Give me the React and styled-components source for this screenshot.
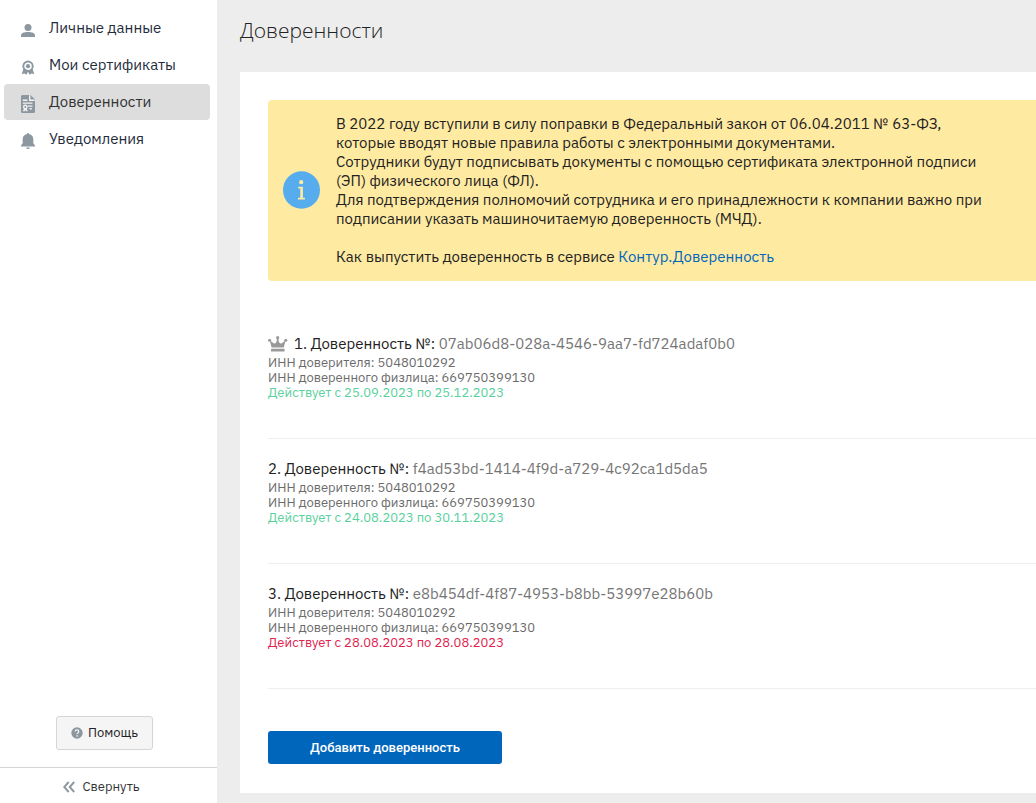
import React, { useState } from "react";
import styled, { createGlobalStyle } from "styled-components";

const menu = [
    { id: "personal", title: "Личные данные", Icon: UserIcon },
    { id: "certs", title: "Мои сертификаты", Icon: CertIcon },
    { id: "poa", title: "Доверенности", Icon: DocIcon },
    { id: "notify", title: "Уведомления", Icon: BellIcon },
];

const poas = [
    {
        number: "07ab06d8-028a-4546-9aa7-fd724adaf0b0",
        issuer: "5048010292",
        person: "669750399130",
        from: "25.09.2023",
        to: "25.12.2023",
        active: true,
        main: true,
    },
    {
        number: "f4ad53bd-1414-4f9d-a729-4c92ca1d5da5",
        issuer: "5048010292",
        person: "669750399130",
        from: "24.08.2023",
        to: "30.11.2023",
        active: true,
    },
    {
        number: "e8b454df-4f87-4953-b8bb-53997e28b60b",
        issuer: "5048010292",
        person: "669750399130",
        from: "28.08.2023",
        to: "28.08.2023",
        active: false,
    },
];

function UserIcon() {
    return (
        <svg width="16" height="16" viewBox="0 0 16 16" fill="currentColor" aria-hidden="true">
            <circle cx="8" cy="5.4" r="3.5" />
            <path d="M1 15v-1.600C1 11 4 9.900 8 9.900s7 1.100 7 3.500V15z" />
        </svg>
    );
}

function CertIcon() {
    return (
        <svg width="16" height="16" viewBox="0 0 16 16" aria-hidden="true">
            <path d="M3.800 9 1.700 15l2.900-.5L6.600 15.800 8 12.600l1.400 3.200 2-1.300 2.900.5-2.100-6z" fill="currentColor" />
            <circle cx="8" cy="7.200" r="4.700" fill="#fff" stroke="currentColor" strokeWidth="1.900" />
            <circle cx="8" cy="7.200" r="2.100" fill="currentColor" />
        </svg>
    );
}

function DocIcon() {
    return (
        <svg width="16" height="20" viewBox="0 0 16 20" aria-hidden="true">
            <path d="M2.300 1H10.500l4.500 4.500v12A1.500 1.500 0 0 1 13.500 19h-11A1.500 1.500 0 0 1 1 17.500v-15A1.400 1.400 0 0 1 2.300 1z" fill="currentColor" />
            <path d="M9.700 1.300v4.900h5M2.800 6.200h4.700M2.800 9.100h9.700M8 12.100h4.500M9.500 14.800h2.300" fill="none" stroke="#f2f2f2" strokeWidth="1.400" />
            <circle cx="5.300" cy="13" r="1.700" fill="none" stroke="#f2f2f2" strokeWidth="1.400" />
            <path d="m4.200 14.500-1.500 2.800h1.900l.7-1 .7 1h1.900l-1.500-2.800z" fill="#f2f2f2" />
        </svg>
    );
}

function BellIcon() {
    return (
        <svg width="16" height="18" viewBox="0 0 16 18" fill="currentColor" aria-hidden="true">
            <path d="M7 1.900a1 1 0 0 1 2 0c2.700.5 4.300 2.500 4.300 5v4.300l1.700 2.300v1H1v-1l1.700-2.300V6.900c0-2.500 1.600-4.500 4.300-5z" />
            <path d="M6.200 15.500h3.600a1.800 1.600 0 0 1-3.600 0z" />
        </svg>
    );
}

function HelpIcon() {
    return (
        <svg width="12" height="12" viewBox="0 0 12 12" aria-hidden="true">
            <circle cx="6" cy="6" r="5.700" fill="#8d979f" />
            <path d="M4.200 4.600c0-1.100.8-1.700 1.800-1.700s1.800.6 1.800 1.600c0 1.200-1.700 1.300-1.700 2.600" fill="none" stroke="#f5f5f5" strokeWidth="1.200" />
            <circle cx="6.100" cy="8.900" r=".8" fill="#f5f5f5" />
        </svg>
    );
}

function CollapseIcon() {
    return (
        <svg width="12" height="12" viewBox="0 0 12 12" fill="none" stroke="#8d979f" strokeWidth="1.900" aria-hidden="true">
            <path d="M5.700 1 1.200 6l4.500 5M11.200 1 6.700 6l4.500 5" />
        </svg>
    );
}

function InfoIcon() {
    return (
        <InfoSvg width="37" height="38" viewBox="0 0 37 38" aria-hidden="true">
            <ellipse cx="18.500" cy="19" rx="18.500" ry="18.800" fill="#57acee" />
            <circle cx="18.200" cy="11.200" r="2.100" fill="#ffeaa2" />
            <path d="M15.200 15.800h4.700v11h2v1.700h-6.900v-1.700h2.300v-9.300h-2.100z" fill="#ffeaa2" />
        </InfoSvg>
    );
}

function CrownIcon() {
    return (
        <svg width="20" height="16" viewBox="0 0 20 16" fill="#999" role="img" aria-label="Основная">
            <path d="M3.600 11.500 1.800 4.600l3.900 2.700c1.400.7 2.700-.4 3-2.300L9 2h1.400l.3 3c.3 1.900 1.600 3 3 2.300l3.900-2.700-1.800 6.900z" />
            <circle cx="9.700" cy="1.700" r="1.600" />
            <circle cx="1.600" cy="4.300" r="1.500" />
            <circle cx="17.800" cy="4.300" r="1.500" />
            <rect x="3" y="12.800" width="13.600" height="2.700" rx=".6" />
        </svg>
    );
}

const App = () => {
    const [current, setCurrent] = useState("poa");

    return (
        <Page>
            <GlobalStyle />
            <Sidebar>
                <Menu>
                    {menu.map(({ id, title, Icon }) => (
                        <MenuLink
                            key={id}
                            href={`#${id}`}
                            $active={id === current}
                            onClick={() => setCurrent(id)}
                        >
                            <MenuIcon><Icon /></MenuIcon>
                            {title}
                        </MenuLink>
                    ))}
                </Menu>
                <HelpRow>
                    <HelpButton type="button"><HelpIcon />Помощь</HelpButton>
                </HelpRow>
                <CollapseButton type="button"><CollapseIcon />Свернуть</CollapseButton>
            </Sidebar>
            <Main>
                <Title>Доверенности</Title>
                <Card>
                    <Notice>
                        <InfoIcon />
                        <NoticeText>
                            <p>
                                В 2022 году вступили в силу поправки в Федеральный закон от 06.04.2011 № 63-ФЗ,<br />
                                которые вводят новые правила работы с электронными документами.
                            </p>
                            <p>
                                Сотрудники будут подписывать документы с помощью сертификата электронной подписи<br />
                                (ЭП) физического лица (ФЛ).
                            </p>
                            <p>
                                Для подтверждения полномочий сотрудника и его принадлежности к компании важно при<br />
                                подписании указать машиночитаемую доверенность (МЧД).
                            </p>
                            <HowTo>
                                Как выпустить доверенность в сервисе <Link href="#kontur">Контур.Доверенность</Link>
                            </HowTo>
                        </NoticeText>
                    </Notice>
                    <List>
                        {poas.map((poa, i) => (
                            <Item key={poa.number}>
                                <ItemTitle>
                                    {poa.main && <CrownIcon />}
                                    <span>
                                        {i + 1}. Доверенность №: <Number>{poa.number}</Number>
                                    </span>
                                </ItemTitle>
                                <Detail>ИНН доверителя: {poa.issuer}</Detail>
                                <Detail>ИНН доверенного физлица: {poa.person}</Detail>
                                <Validity $active={poa.active}>
                                    Действует с {poa.from} по {poa.to}
                                </Validity>
                            </Item>
                        ))}
                    </List>
                    <AddButton type="button">Добавить доверенность</AddButton>
                </Card>
            </Main>
        </Page>
    );
};
export default App;

const GlobalStyle = createGlobalStyle`
    * {
        box-sizing: border-box;
    }
    body {
        margin: 0;
        background: #ededed;
        color: #222;
        font-family: "IBM Plex Sans", Roboto, sans-serif;
        font-size: 15px;
        line-height: 19px;
    }
    p, ul, h1, h2 {
        margin: 0;
        padding: 0;
    }
    button {
        font-family: inherit;
        cursor: pointer;
    }
`;
const Page = styled.div`
    display: flex;
    min-height: 100vh;
`;
const Sidebar = styled.aside`
    display: flex;
    flex-direction: column;
    flex: 0 0 217px;
    background: #fff;
`;
const Menu = styled.nav`
    display: flex;
    flex-direction: column;
    gap: 1px;
    padding: 10px 7px 0 4px;
`;
const MenuLink = styled.a`
    display: flex;
    align-items: center;
    gap: 13px;
    height: 36px;
    padding: 0 0 2px 16px;
    border-radius: 4px;
    background: ${({ $active }) => ($active ? "#dddddd" : "transparent")};
    color: ${({ $active }) => ($active ? "#333" : "#1f2d3d")};
    text-decoration: none;
`;
const MenuIcon = styled.span`
    display: flex;
    justify-content: center;
    width: 16px;
    padding-top: 6px;
    color: #8d979f;
`;
const HelpRow = styled.div`
    display: flex;
    justify-content: center;
    margin-top: auto;
    padding: 0 8px 17px 0;
`;
const HelpButton = styled.button`
    display: flex;
    align-items: center;
    gap: 5px;
    height: 34px;
    padding: 0 14px 1px;
    border: 1px solid #d5d5d5;
    border-radius: 3px;
    background: #f5f5f5;
    color: #222;
    font-size: 13px;
`;
const CollapseButton = styled.button`
    display: flex;
    align-items: center;
    justify-content: center;
    gap: 7px;
    height: 36px;
    padding: 2px 14px 0 0;
    border: 0;
    border-top: 1px solid #d5d5d5;
    background: none;
    color: #333;
    font-size: 13px;
`;
const Main = styled.main`
    flex: 1;
    min-width: 0;
    padding: 14px 0 10px 23px;
`;
const Title = styled.h1`
    margin-bottom: 26px;
    font-family: "Open Sans", sans-serif;
    font-size: 21px;
    font-weight: 300;
    line-height: 32px;
`;
const Card = styled.section`
    padding: 28px 0 29px 28px;
    background: #fff;
`;
const Notice = styled.div`
    display: flex;
    align-items: center;
    gap: 16px;
    padding: 14px 15px 15px;
    border-radius: 4px 0 0 4px;
    background: #ffeaa2;
`;
const InfoSvg = styled.svg`
    flex: none;
`;
const NoticeText = styled.div`
    min-width: 0;
`;
const HowTo = styled.p`
    padding-top: 19px;
`;
const Link = styled.a`
    color: #0066bb;
    text-decoration: none;
`;
const List = styled.ul`
    padding-top: 33px;
    list-style: none;
`;
const Item = styled.li`
    padding: 20px 0 38px;
    border-bottom: 1px solid #eee;
`;
const ItemTitle = styled.h2`
    display: flex;
    align-items: center;
    gap: 6px;
    margin-bottom: 1px;
    font-size: 15px;
    font-weight: 400;
    line-height: 20px;
`;
const Number = styled.span`
    color: #757575;
`;
const Detail = styled.p`
    color: #6b6b6b;
    font-size: 13px;
    line-height: 15px;
`;
const Validity = styled(Detail)`
    color: ${({ $active }) => ($active ? "#59d19c" : "#e0224e")};
`;
const AddButton = styled.button`
    width: 234px;
    height: 33px;
    margin-top: 42px;
    border: 0;
    border-radius: 3px;
    background: #0066bb;
    color: #fff;
    font-family: Roboto, sans-serif;
    font-size: 13px;
    font-weight: 500;
`;
